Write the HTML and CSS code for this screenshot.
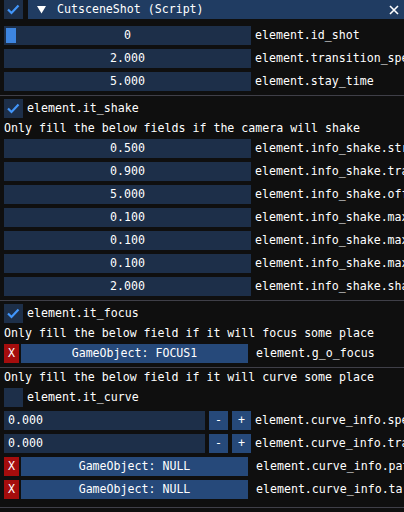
FILE: index.html
```html
<!DOCTYPE html>
<html>
<head>
<meta charset="utf-8">
<link rel="stylesheet" href="styles.css">
</head>
<body>
<div class="panel">
  <div class="title-row">
    <span class="check"><svg class="tick" viewBox="0 0 19 19" width="19" height="19"><polyline points="4,9.5 7.5,13 14.5,5.5" /></svg></span>
    <div class="header">
      <svg class="arrow" viewBox="0 0 9 8" width="9" height="8"><polygon points="0,0 9,0 4.5,7.5" /></svg>
      <span class="htext">CutsceneShot (Script)</span>
      <svg class="close" viewBox="0 0 10 10" width="10" height="10"><path d="M1 1 L9 9 M9 1 L1 9" /></svg>
    </div>
  </div>

  <div class="row"><div class="field"><span class="grab"></span><span>0</span></div><span class="label">element.id_shot</span></div>
  <div class="row"><div class="field">2.000</div><span class="label">element.transition_speed</span></div>
  <div class="row"><div class="field">5.000</div><span class="label">element.stay_time</span></div>

  <div class="sep"></div>

  <div class="row"><span class="check"><svg class="tick" viewBox="0 0 19 19" width="19" height="19"><polyline points="4,9.5 7.5,13 14.5,5.5" /></svg></span><span class="clabel">element.it_shake</span></div>
  <div class="text">Only fill the below fields if the camera will shake</div>
  <div class="row"><div class="field">0.500</div><span class="label">element.info_shake.strength</span></div>
  <div class="row"><div class="field">0.900</div><span class="label">element.info_shake.traumaDecay</span></div>
  <div class="row"><div class="field">5.000</div><span class="label">element.info_shake.offset</span></div>
  <div class="row"><div class="field">0.100</div><span class="label">element.info_shake.max_x</span></div>
  <div class="row"><div class="field">0.100</div><span class="label">element.info_shake.max_y</span></div>
  <div class="row"><div class="field">0.100</div><span class="label">element.info_shake.max_z</span></div>
  <div class="row"><div class="field">2.000</div><span class="label">element.info_shake.shake_time</span></div>

  <div class="sep"></div>

  <div class="row"><span class="check"><svg class="tick" viewBox="0 0 19 19" width="19" height="19"><polyline points="4,9.5 7.5,13 14.5,5.5" /></svg></span><span class="clabel">element.it_focus</span></div>
  <div class="text">Only fill the below field if it will focus some place</div>
  <div class="row"><span class="xbtn">X</span><span class="gobtn">GameObject: FOCUS1</span><span class="glabel">element.g_o_focus</span></div>

  <div class="sep"></div>

  <div class="text">Only fill the below field if it will curve some place</div>
  <div class="row"><span class="check"></span><span class="clabel">element.it_curve</span></div>
  <div class="row"><div class="input">0.000</div><span class="sbtn">-</span><span class="sbtn">+</span><span class="label">element.curve_info.speed</span></div>
  <div class="row"><div class="input">0.000</div><span class="sbtn">-</span><span class="sbtn">+</span><span class="label">element.curve_info.transition</span></div>
  <div class="row"><span class="xbtn">X</span><span class="gobtn">GameObject: NULL</span><span class="glabel">element.curve_info.path</span></div>
  <div class="row"><span class="xbtn">X</span><span class="gobtn">GameObject: NULL</span><span class="glabel">element.curve_info.target</span></div>

  <div class="sep last"></div>
</div>
</body>
</html>
```

FILE: styles.css
```css
html, body {
  margin: 0;
  padding: 0;
}
body {
  background: #0f0f0f;
  width: 404px;
  height: 512px;
  overflow: hidden;
  font-family: "DejaVu Sans Mono", "Liberation Mono", monospace;
  font-size: 11.6px;
  line-height: 13px;
  color: #ffffff;
}
.panel {
  display: flex;
  flex-direction: column;
  gap: 4px;
  padding-left: 4px;
}
.title-row {
  display: flex;
  height: 19px;
  margin-bottom: 3px;
}
.check {
  flex: none;
  width: 19px;
  height: 19px;
  background: #1d2f49;
  display: block;
}
.tick {
  display: block;
  fill: none;
  stroke: #4296fa;
  stroke-width: 2.2;
  stroke-linecap: butt;
  stroke-linejoin: miter;
}
.header {
  flex: 1;
  margin-left: 5px;
  background: #203c62;
  display: flex;
  align-items: center;
}
.arrow {
  flex: none;
  margin-left: 9px;
  fill: #ffffff;
}
.htext {
  margin-left: 11px;
  white-space: nowrap;
}
.close {
  margin-left: auto;
  margin-right: 5px;
  fill: none;
  stroke: #ffffff;
  stroke-width: 1.6;
}
.row {
  display: flex;
  align-items: center;
  height: 19px;
  white-space: nowrap;
}
.field {
  position: relative;
  flex: none;
  width: 247px;
  height: 19px;
  background: #1d2f49;
  display: flex;
  align-items: center;
  justify-content: center;
}
.grab {
  position: absolute;
  left: 2px;
  top: 2px;
  width: 10px;
  height: 15px;
  background: #3d85e0;
}
.label {
  margin-left: 4px;
}
.clabel {
  margin-left: 4px;
}
.text {
  height: 13px;
  white-space: nowrap;
}
.sep {
  height: 1px;
  background: #3f3f48;
  margin-left: -4px;
  margin-bottom: -1px;
}
.sep.last {
  margin-top: 4px;
}
.xbtn {
  flex: none;
  width: 15px;
  height: 19px;
  background: #a50d0d;
  display: flex;
  align-items: center;
  justify-content: center;
}
.gobtn {
  flex: none;
  width: 227px;
  height: 19px;
  margin-left: 2px;
  background: #26497a;
  display: flex;
  align-items: center;
  justify-content: center;
}
.glabel {
  margin-left: 8px;
}
.input {
  flex: none;
  width: 197px;
  height: 19px;
  padding-left: 4px;
  background: #1d2f49;
  display: flex;
  align-items: center;
}
.sbtn {
  flex: none;
  width: 19px;
  height: 19px;
  margin-left: 4px;
  background: #26497a;
  display: flex;
  align-items: center;
  justify-content: center;
}
```
